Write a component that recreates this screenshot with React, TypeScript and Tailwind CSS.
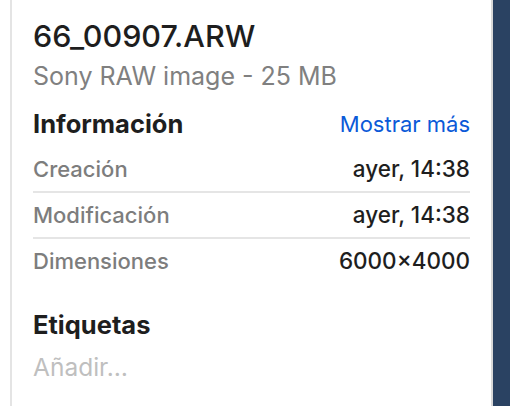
export default function App() {
  const rows = [
    { label: "Creación", value: "ayer, 14:38" },
    { label: "Modificación", value: "ayer, 14:38" },
    { label: "Dimensiones", value: "6000×4000" },
  ]
  return (
    <div className="flex h-[406px] w-[510px] bg-white" style={{ fontFamily: "Inter, 'Noto Sans', sans-serif" }}>
      <div className="w-[10px] bg-white" />
      <div className="w-[2px] bg-[#e4e4e4]" />
      <div className="flex w-[479px] flex-col px-[21px] pt-[18px]">
        <h1 className="h-[36px] text-[30.5px] leading-[36px] font-medium text-[#1e1e1e]">66_00907.ARW</h1>
        <p className="mt-[7px] h-[30px] text-[25px] leading-[30px] text-[#808080]">Sony RAW image - 25 MB</p>
        <div className="mt-[18px] flex h-[30px] items-center justify-between">
          <h2 className="text-[25.5px] leading-[30px] font-bold text-[#1e1e1e]">Información</h2>
          <button className="text-[22px] leading-[30px] text-[#0b5ad8]">Mostrar más</button>
        </div>
        <div className="mt-[8px] flex flex-col">
          {rows.map((r, i) => (
            <div
              key={r.label}
              className={`flex h-[46px] items-start justify-between text-[22px] leading-[44px] font-medium ${i < rows.length - 1 ? "border-b-2 border-[#e5e5e5]" : ""}`}
            >
              <span className="text-[#7d7d7d]">{r.label}</span>
              <span className="text-[22.5px] text-[#1e1e1e]">{r.value}</span>
            </div>
          ))}
        </div>
        <h2 className="mt-[25px] h-[30px] text-[25.5px] leading-[30px] font-bold text-[#1e1e1e]">Etiquetas</h2>
        <p className="mt-[12px] h-[30px] text-[24.5px] leading-[30px] text-[#bfbfbf]">Añadir…</p>
      </div>
      <div className="w-[2px] bg-[#d9d9d9]" />
      <div className="flex-1 bg-[#2a4262]" />
    </div>
  )
}
